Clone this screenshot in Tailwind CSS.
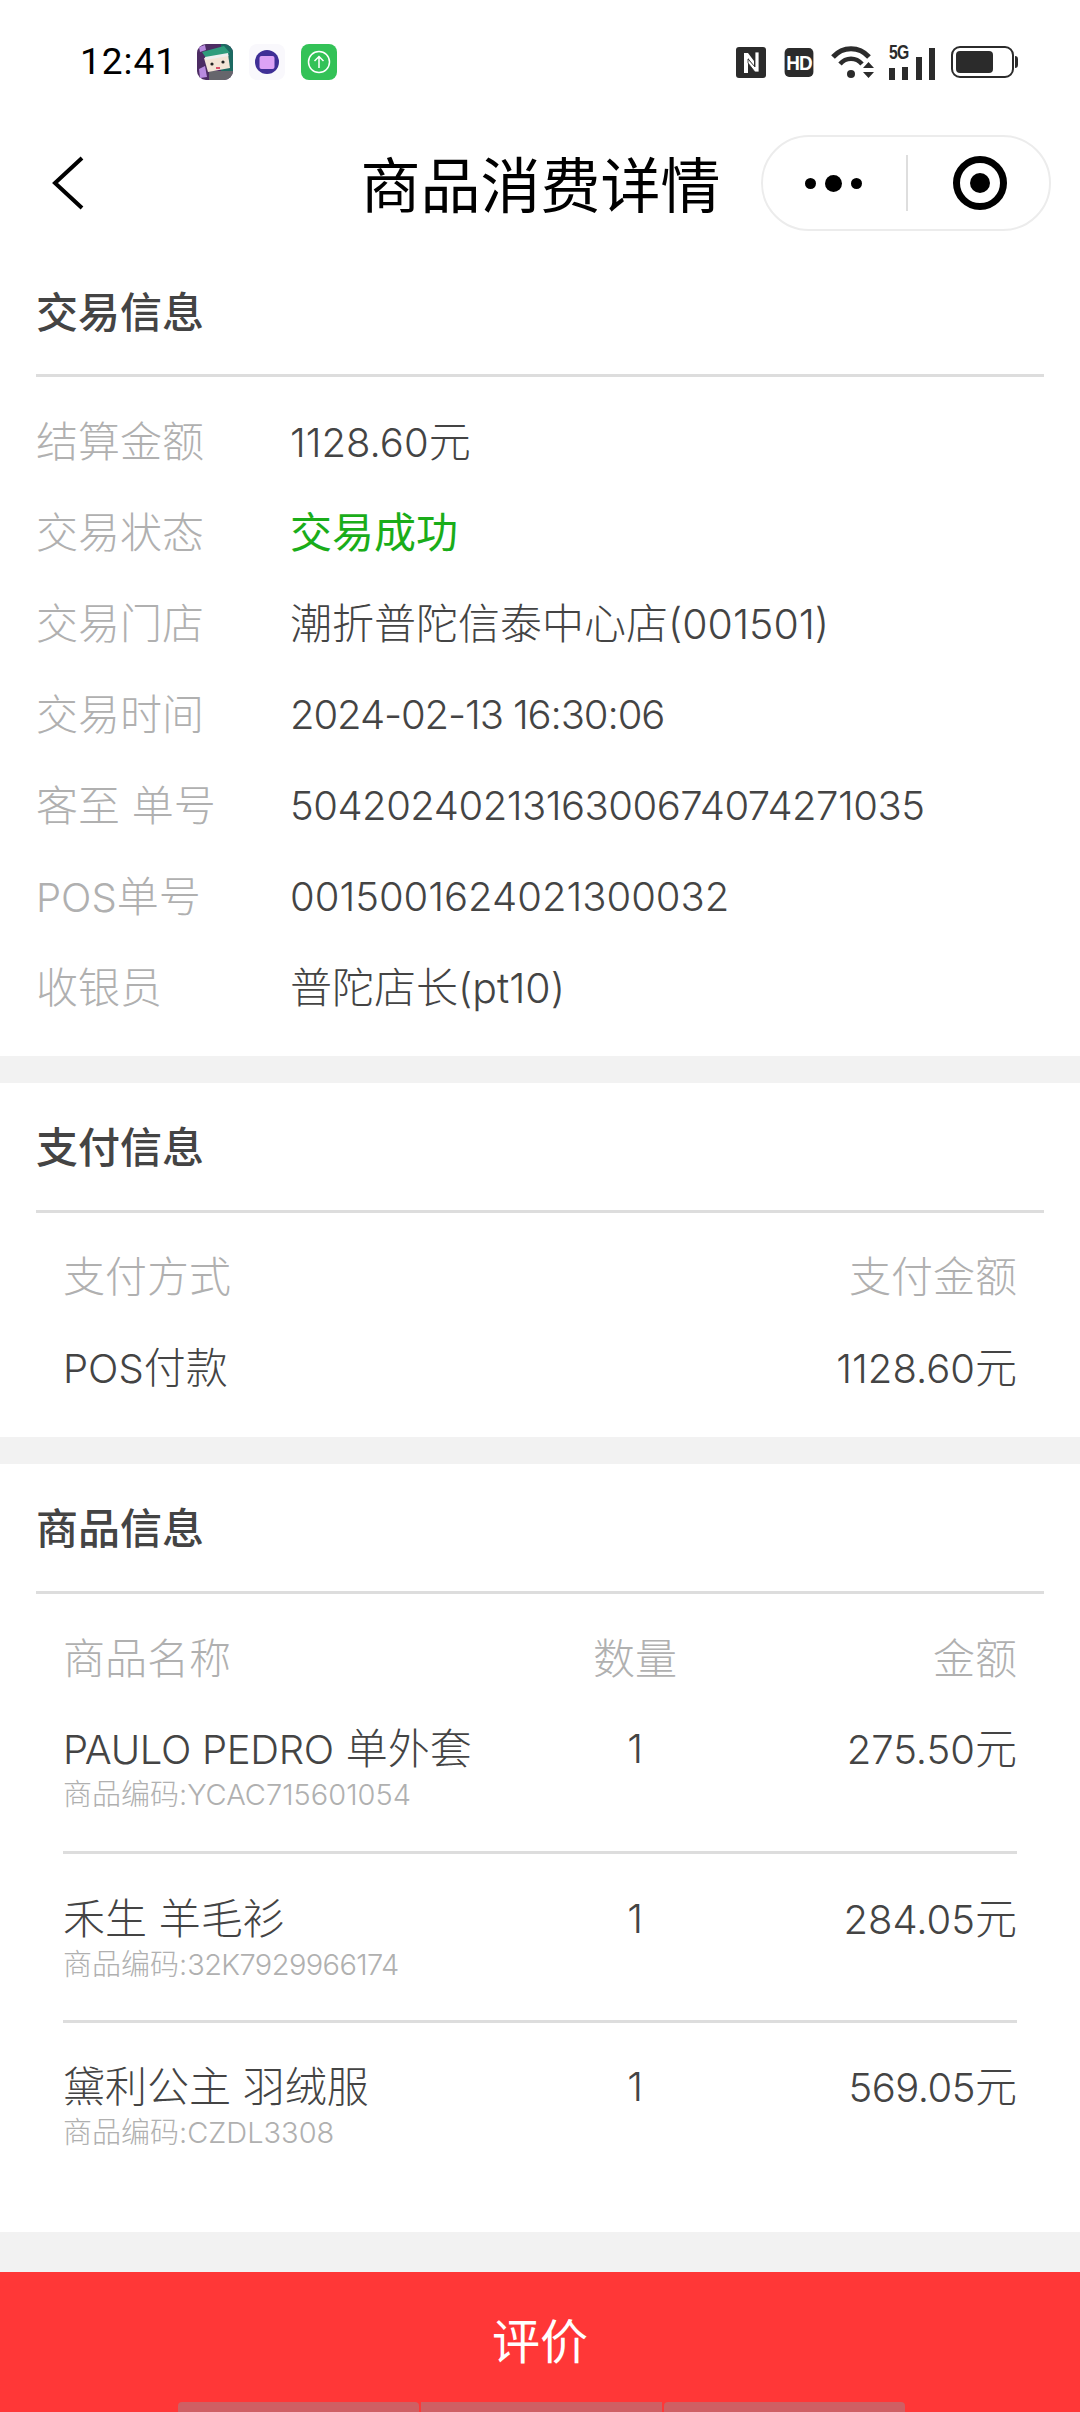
<!DOCTYPE html>
<html lang="zh-CN">
<head>
  <meta charset="UTF-8" />
  <meta name="viewport" content="width=device-width, initial-scale=1.0" />
  <title>商品消费详情</title>
  <script src="https://cdn.jsdelivr.net/npm/@tailwindcss/browser@4"></script>
</head>
<body class="bg-[#f2f2f2] font-['Inter','Noto_Sans_CJK_SC',sans-serif]">
  <div class="w-[1080px] h-[2412px] flex flex-col overflow-hidden">

    <!-- status bar -->
    <div class="h-[124px] bg-white flex items-center justify-between pl-[80px] pr-[62px] text-black">
      <div class="flex items-center">
        <span class="text-[37px] font-normal font-['Roboto',sans-serif] tracking-[1px] w-[117px]">12:41</span>
        <svg width="36" height="36" viewBox="0 0 36 36">
          <defs><clipPath id="app"><rect width="36" height="36" rx="9"/></clipPath></defs>
          <g clip-path="url(#app)">
            <rect width="36" height="36" fill="#4c2c63"/>
            <rect x="24" width="12" height="27" fill="#1d6a62"/>
            <rect y="27" x="12" width="24" height="9" fill="#66666c"/>
            <path d="M5 8 27 2 33 9 9 14Z" fill="#2f9c7c"/>
            <path d="M7 14 31 10 33 24 11 28Z" fill="#f3e4d6"/>
            <path d="M8 13 31 9 31.500 12 8.500 16Z" fill="#eeeeee"/>
            <circle cx="15" cy="20" r="1.600" fill="#222"/><circle cx="26" cy="18" r="1.600" fill="#222"/>
            <rect x="19" y="23" width="4" height="2" fill="#d9506a"/>
            <path d="M2 25 8 22 10 33 3 34Z" fill="#b98be0"/>
            <path d="M2 3 8 1 9 6 3 8Z" fill="#b98be0"/>
          </g>
        </svg>
        <svg width="36" height="36" viewBox="0 0 36 36" class="ml-[16px]">
          <rect width="36" height="36" rx="8" fill="#f9f8fc"/>
          <circle cx="18" cy="18" r="12" fill="#3f2f96"/>
          <rect x="10.500" y="12" width="15" height="13" rx="2" fill="#dca2f5"/>
        </svg>
        <svg width="36" height="36" viewBox="0 0 36 36" class="ml-[16px]">
          <rect width="36" height="36" rx="8" fill="#33c257"/>
          <circle cx="18" cy="18" r="10.500" fill="none" stroke="#fff" stroke-width="1.500"/>
          <path d="M18 24V12.500M13.500 17 18 12.500 22.500 17" fill="none" stroke="#fff" stroke-width="1.500"/>
        </svg>
      </div>
      <div class="flex items-center">
        <svg width="30" height="31" viewBox="0 0 30 31">
          <rect width="30" height="31" rx="3" fill="#2b2b2b"/>
          <path d="M8 26V6h4l6 8v5l-6-8v15Z" fill="#fff"/>
          <path d="M23 5v20h-4l-7-9v-4l7 8V5Z" fill="#fff" stroke="#2b2b2b" stroke-width="0.800"/>
        </svg>
        <div class="ml-[17px] w-[32px] h-[29px] rounded-[5px] bg-[#2b2b2b] flex items-center justify-center text-white text-[21px] leading-none font-bold font-['Liberation_Sans',sans-serif] tracking-[-1px] scale-x-90">HD</div>
        <svg width="44" height="36" viewBox="0 0 44 36" class="ml-[16px]">
          <path d="M2 13C12 2 28 2 38 13" fill="none" stroke="#2b2b2b" stroke-width="5"/>
          <path d="M9 20C15 13 25 13 31 20" fill="none" stroke="#2b2b2b" stroke-width="4.500"/>
          <circle cx="20" cy="30" r="4" fill="#2b2b2b"/>
          <path d="M32 24h11l-5.500-6ZM32 28h11l-5.500 6Z" fill="#2b2b2b"/>
        </svg>
        <div class="ml-[14px] relative w-[46px] h-[36px]">
          <span class="absolute left-0 -top-[3px] text-[21px] leading-none font-bold font-['Liberation_Sans',sans-serif] text-[#2b2b2b] scale-x-75 origin-left tracking-[-1px]">5G</span>
          <div class="absolute inset-0 flex items-end justify-between">
            <i class="block w-[6px] h-[12px] bg-[#2b2b2b]"></i>
            <i class="block w-[6px] h-[13px] bg-[#2b2b2b]"></i>
            <i class="block w-[6px] h-[23px] bg-[#2b2b2b]"></i>
            <i class="block w-[6px] h-[32px] bg-[#2b2b2b]"></i>
          </div>
        </div>
        <div class="ml-[16px] flex items-center">
          <div class="w-[63px] h-[32px] rounded-[9px] border-2 border-[#2b2b2b] p-[3px]">
            <div class="w-[37px] h-full rounded-[4px] bg-[#2b2b2b]"></div>
          </div>
          <i class="block ml-[1px] w-[3px] h-[12px] bg-[#2b2b2b] rounded-r-sm"></i>
        </div>
      </div>
    </div>

    <!-- nav bar -->
    <div class="relative h-[126px] bg-white flex items-center justify-center text-black">
      <svg width="34" height="54" viewBox="0 0 34 54" class="absolute left-[51px] top-[32px]">
        <path d="M31 2 4 27 31 52" fill="none" stroke="#000" stroke-width="4"/>
      </svg>
      <div class="text-[60px] font-normal leading-none -mt-[3px] ml-[1px]">商品消费详情</div>
      <div class="absolute left-[761px] top-[11px] w-[290px] h-[96px] rounded-full border-2 border-[#ececec] flex items-center bg-white">
        <div class="w-[143px] pr-[2px] flex items-center justify-center gap-[9px]">
          <i class="block w-[11px] h-[11px] rounded-full bg-black"></i>
          <i class="block w-[17px] h-[17px] rounded-full bg-black"></i>
          <i class="block w-[11px] h-[11px] rounded-full bg-black"></i>
        </div>
        <div class="w-[2px] h-[56px] bg-[#dedede]"></div>
        <div class="flex-1 pl-[2px] flex items-center justify-center">
          <div class="w-[54px] h-[54px] rounded-full border-[7px] border-black flex items-center justify-center">
            <i class="block w-[20px] h-[20px] rounded-full bg-black"></i>
          </div>
        </div>
      </div>
    </div>

    <!-- 交易信息 -->
    <section class="bg-white px-[36px] pb-[23px]">
      <h2 class="h-[127px] flex items-center text-[42px] font-medium text-[#444] border-b-[3px] border-[#dddddd]">交易信息</h2>
      <div class="pt-[19px] text-[42px] font-light leading-none text-[#444]">
        <div class="h-[91px] flex items-center"><span class="w-[254px] text-[#b0b0b0]">结算金额</span><span><span class="text-[40px]">1128.60</span>元</span></div>
        <div class="h-[91px] flex items-center"><span class="w-[254px] text-[#b0b0b0]">交易状态</span><span class="text-[#1aad19] font-normal">交易成功</span></div>
        <div class="h-[91px] flex items-center"><span class="w-[254px] text-[#b0b0b0]">交易门店</span><span>潮折普陀信泰中心店<span class="text-[41px]">(001501)</span></span></div>
        <div class="h-[91px] flex items-center"><span class="w-[254px] text-[#b0b0b0]">交易时间</span><span class="text-[40px] tracking-[-1.100px]">2024-02-13 16:30:06</span></div>
        <div class="h-[91px] flex items-center"><span class="w-[254px] text-[#b0b0b0]">客至 单号</span><span class="text-[40px] tracking-[-0.500px]">5042024021316300674074271035</span></div>
        <div class="h-[91px] flex items-center"><span class="w-[254px] text-[#b0b0b0]"><span class="text-[40px]">POS</span>单号</span><span class="text-[40px]">0015001624021300032</span></div>
        <div class="h-[91px] flex items-center"><span class="w-[254px] text-[#b0b0b0]">收银员</span><span>普陀店长<span class="text-[41px]">(pt10)</span></span></div>
      </div>
    </section>

    <!-- 支付信息 -->
    <section class="mt-[27px] bg-white px-[36px] h-[354px]">
      <h2 class="h-[130px] pt-[2px] flex items-center text-[42px] font-medium text-[#444] border-b-[3px] border-[#dddddd]">支付信息</h2>
      <div class="pt-[18px] px-[27px] text-[42px] font-light leading-none text-[#444]">
        <div class="h-[91px] flex items-center justify-between text-[#b0b0b0]"><span>支付方式</span><span>支付金额</span></div>
        <div class="h-[91px] flex items-center justify-between"><span><span class="text-[40px]">POS</span>付款</span><span><span class="text-[40px]">1128.60</span>元</span></div>
      </div>
    </section>

    <!-- 商品信息 -->
    <section class="mt-[27px] bg-white px-[36px] h-[768px]">
      <h2 class="h-[130px] pt-[2px] flex items-center text-[42px] font-medium text-[#444] border-b-[3px] border-[#dddddd]">商品信息</h2>
      <div class="pt-[19px] px-[27px] text-[42px] font-light leading-none text-[#444]">
        <div class="h-[92px] flex items-center text-[#b0b0b0]"><span class="flex-1">商品名称</span><span class="w-[160px] text-center">数量</span><span class="w-[302px] text-right">金额</span></div>
        <div class="h-[149px] border-b-[3px] border-[#dddddd] pt-[23px]">
          <div class="flex items-center"><span class="flex-1"><span class="text-[40px] tracking-[-0.300px]">PAULO PEDRO</span> 单外套</span><span class="w-[160px] text-center text-[40px]">1</span><span class="w-[302px] text-right"><span class="text-[40px]">275.50</span>元</span></div>
          <div class="mt-[10px] text-[29px] text-[#b0b0b0]">商品编码:YCAC715601054</div>
        </div>
        <div class="h-[169px] border-b-[3px] border-[#dddddd] pt-[44px]">
          <div class="flex items-center"><span class="flex-1">禾生 羊毛衫</span><span class="w-[160px] text-center text-[40px]">1</span><span class="w-[302px] text-right"><span class="text-[40px]">284.05</span>元</span></div>
          <div class="mt-[10px] text-[29px] text-[#b0b0b0]">商品编码:<span class="tracking-[-0.600px]">32K7929966174</span></div>
        </div>
        <div class="pt-[43px]">
          <div class="flex items-center"><span class="flex-1">黛利公主 羽绒服</span><span class="w-[160px] text-center text-[40px]">1</span><span class="w-[302px] text-right"><span class="text-[40px] tracking-[-0.500px]">569.05</span>元</span></div>
          <div class="mt-[10px] text-[29px] text-[#b0b0b0]">商品编码:CZDL3308</div>
        </div>
      </div>
    </section>

    <!-- 底部按钮 -->
    <div class="mt-[40px] flex-1 relative bg-[#ff3737] flex items-start justify-center text-white text-[48px] leading-none pt-[46px]">
      评价
      <div class="absolute left-[178px] bottom-0 w-[727px] h-[10px] flex gap-[2px]">
        <i class="block flex-1 bg-[#cf5f63] rounded-t-sm"></i>
        <i class="block flex-1 bg-[#cf5f63]"></i>
        <i class="block flex-1 bg-[#cf5f63] rounded-t-sm"></i>
      </div>
    </div>
  </div>
</body>
</html>
